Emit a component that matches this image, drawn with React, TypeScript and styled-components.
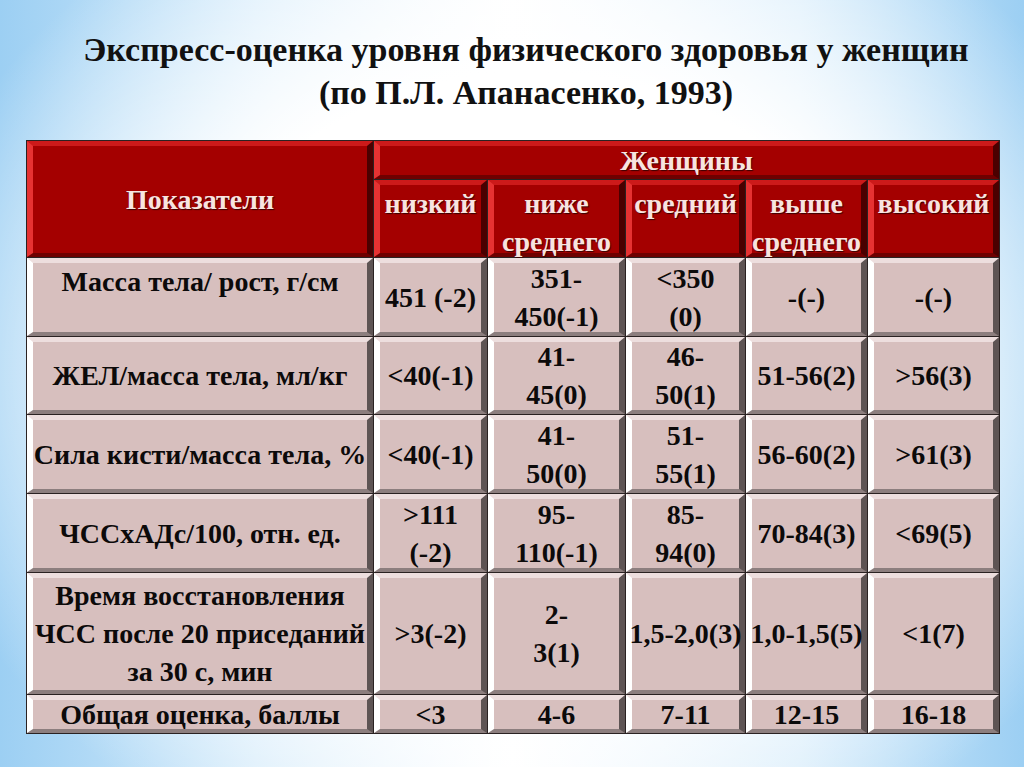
import React from 'react'
import styled, { createGlobalStyle, css } from 'styled-components'

const GlobalStyle = createGlobalStyle`
  html, body {
    margin: 0;
    padding: 0;
  }
  body {
    font-family: "Liberation Serif", serif;
  }
`

type Align = 'top' | 'center'

interface Row {
  label: string[]
  labelAlign?: Align
  values: string[][]
}

const rows: Row[] = [
  {
    label: ['Масса тела/ рост, г/см'],
    labelAlign: 'top',
    values: [['451 (-2)'], ['351-', '450(-1)'], ['<350', '(0)'], ['-(-)'], ['-(-)']],
  },
  {
    label: ['ЖЕЛ/масса тела, мл/кг'],
    values: [['<40(-1)'], ['41-', '45(0)'], ['46-', '50(1)'], ['51-56(2)'], ['>56(3)']],
  },
  {
    label: ['Сила кисти/масса тела, %'],
    values: [['<40(-1)'], ['41-', '50(0)'], ['51-', '55(1)'], ['56-60(2)'], ['>61(3)']],
  },
  {
    label: ['ЧССхАДс/100, отн. ед.'],
    values: [['>111', '(-2)'], ['95-', '110(-1)'], ['85-', '94(0)'], ['70-84(3)'], ['<69(5)']],
  },
  {
    label: ['Время восстановления', 'ЧСС после 20 приседаний', 'за 30 с, мин'],
    values: [['>3(-2)'], ['2-', '3(1)'], ['1,5-2,0(3)'], ['1,0-1,5(5)'], ['<1(7)']],
  },
  {
    label: ['Общая оценка, баллы'],
    values: [['<3'], ['4-6'], ['7-11'], ['12-15'], ['16-18']],
  },
]

const levels = [['низкий'], ['ниже', 'среднего'], ['средний'], ['выше', 'среднего'], ['высокий']]

export default function App() {
  return (
    <>
      <GlobalStyle />
      <Page>
        <Title>
          <TitleLine>Экспресс-оценка уровня физического здоровья у женщин</TitleLine>
          <TitleLine>(по П.Л. Апанасенко, 1993)</TitleLine>
        </Title>
        <Table>
          <HeadCell $align="center" style={{ gridRow: 'span 2' }}>
            Показатели
          </HeadCell>
          <HeadCell $align="center" style={{ gridColumn: 'span 5' }}>
            Женщины
          </HeadCell>
          {levels.map((lines, i) => (
            <HeadCell key={i} $align="top">
              {lines.map((l, j) => (
                <Line key={j}>{l}</Line>
              ))}
            </HeadCell>
          ))}
          {rows.map((row, r) => (
            <React.Fragment key={r}>
              <BodyCell $align={row.labelAlign ?? 'center'}>
                {row.label.map((l, j) => (
                  <Line key={j}>{l}</Line>
                ))}
              </BodyCell>
              {row.values.map((lines, c) => (
                <BodyCell key={c} $align="center">
                  {lines.map((l, j) => (
                    <Line key={j}>{l}</Line>
                  ))}
                </BodyCell>
              ))}
            </React.Fragment>
          ))}
        </Table>
      </Page>
    </>
  )
}

const Page = styled.div`
  width: 1024px;
  height: 767px;
  box-sizing: border-box;
  padding: 28px 0 0 26px;
  overflow: hidden;
  font-family: "Liberation Serif", serif;
  background:
    radial-gradient(ellipse 62% 70% at 52% 48%, #ffffff 55%, rgba(255, 255, 255, 0) 100%),
    linear-gradient(90deg, #9ccff3 0%, #d6ecfb 25%, #ffffff 50%, #d6ecfb 78%, #9ccff3 100%);
`

const Title = styled.div`
  margin: 0 0 26px 0;
  width: 1000px;
  display: flex;
  flex-direction: column;
  align-items: center;
  font-family: "Liberation Serif", serif;
  font-size: 34px;
  line-height: 43px;
  font-weight: bold;
  color: #111;
  white-space: nowrap;
`

const TitleLine = styled.div``

const Table = styled.div`
  display: grid;
  grid-template-columns: 346px 113px 137px 119px 121px 131px;
  grid-template-rows: 38px 77px 78px 77px 78px 78px 121px 38px;
  gap: 1px;
  padding: 1px;
  width: max-content;
  background: #2a2222;
`

const cellBase = css<{ $align: Align }>`
  box-sizing: border-box;
  display: flex;
  flex-direction: column;
  align-items: center;
  justify-content: ${(p) => (p.$align === 'top' ? 'flex-start' : 'center')};
  text-align: center;
  font-family: "Liberation Serif", serif;
  font-weight: bold;
  font-size: 28px;
  line-height: 38px;
  border-style: solid;
  border-width: 5px 6px 4px 6px;
  white-space: nowrap;
  overflow: visible;
`

const HeadCell = styled.div<{ $align: Align }>`
  ${cellBase};
  background: #a40000;
  border-color: #cc1a1a #4a0000 #6e0000 #e63232;
  color: #f8e4e0;
  text-shadow: 1px 1px 1px #3a0000;
`

const BodyCell = styled.div<{ $align: Align }>`
  ${cellBase};
  background: #d7bfbe;
  border-color: #eddede #5e5454 #8c7e7e #ffffff;
  color: #0c0a0a;
`

const Line = styled.span`
  display: block;
`
